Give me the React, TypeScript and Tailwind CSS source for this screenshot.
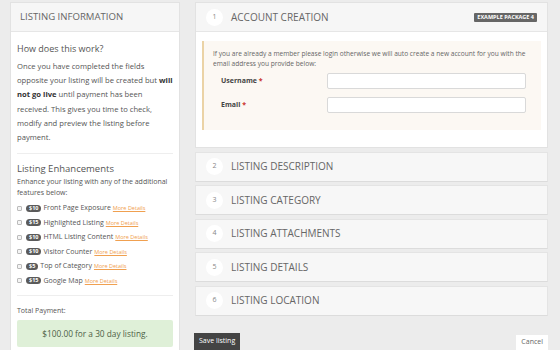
import React from 'react';

const font = { fontFamily: '"Open Sans", "Liberation Sans", sans-serif' };

const enhancements = [
  { price: '$10', label: 'Front Page Exposure' },
  { price: '$15', label: 'Highlighted Listing' },
  { price: '$10', label: 'HTML Listing Content' },
  { price: '$10', label: 'Visitor Counter' },
  { price: '$5', label: 'Top of Category' },
  { price: '$15', label: 'Google Map' },
];

const steps = [
  { n: 2, title: 'Listing Description' },
  { n: 3, title: 'Listing Category' },
  { n: 4, title: 'Listing Attachments' },
  { n: 5, title: 'Listing Details' },
  { n: 6, title: 'Listing Location' },
];

function StepCircle({ n }: { n: number }) {
  return (
    <div className="flex h-[17px] w-[17px] shrink-0 items-center justify-center rounded-full bg-white text-[7px] text-[#888]">
      {n}
    </div>
  );
}

function InfoPanel() {
  return (
    <aside className="flex w-[170px] shrink-0 flex-col border border-[#e2e2e2] bg-white">
      <div className="flex h-[29px] items-center border-b border-[#e6e6e6] bg-[#f6f6f6] px-[9px] text-[9.6px] uppercase text-[#666]">
        Listing Information
      </div>
      <div className="px-[6px] pt-[10px] text-[#555]">
        <h3 className="text-[9px] leading-[14px] text-[#555]">How does this work?</h3>
        <p className="mt-[3px] text-[7.65px] leading-[14.2px]">
          Once you have completed the fields opposite your listing will be created but{' '}
          <b className="font-bold leading-[14.2px] text-[#333]">will not go live</b> until payment has been received.
          This gives you time to check, modify and preview the listing before payment.
        </p>
        <div className="mt-[9px] border-t border-[#eeeeee]" />
        <h3 className="mt-[8px] text-[9.5px] leading-[14px] text-[#555]">Listing Enhancements</h3>
        <p className="mt-[1px] text-[7px] leading-[10.5px]">
          Enhance your listing with any of the additional features below:
        </p>
        <ul className="mt-[3px] flex flex-col">
          {enhancements.map((e) => (
            <li key={e.label} className="flex h-[14.5px] items-center text-[7px]">
              <span className="mr-[4px] h-[5px] w-[5px] rounded-[1px] border border-[#bbb] bg-[#f4f4f4]" />
              <span className="mr-[2px] rounded-full bg-[#5a5a5a] px-[3px] text-[5.5px] font-bold leading-[7px] text-white">
                {e.price}
              </span>
              <span className="text-[#555]">{e.label}</span>
              <a className="ml-[2px] text-[5.5px] text-[#f0a050] underline">More Details</a>
            </li>
          ))}
        </ul>
        <div className="mt-[7px] border-t border-[#eeeeee]" />
        <div className="mt-[10px] text-[7px] leading-[10px]">Total Payment:</div>
        <div className="mt-[4px] flex h-[27px] items-center justify-center rounded-[2px] bg-[#dff0d8] text-[8.3px] text-[#4d6145]">
          $100.00 for a 30 day listing.
        </div>
        <div className="h-[20px]" />
      </div>
    </aside>
  );
}

function AccountStep() {
  return (
    <section className="bg-white">
      <div className="flex h-[29px] items-center border-b border-[#e6e6e6] bg-[#f6f6f6] pl-[10px] pr-[10px]">
        <StepCircle n={1} />
        <span className="ml-[8px] text-[10px] uppercase text-[#666]">Account Creation</span>
        <span className="ml-auto rounded-[1px] bg-[#666] px-[3px] text-[5.5px] font-bold uppercase leading-[9px] text-white">
          Example Package 4
        </span>
      </div>
      <div className="px-[6px] pb-[17px] pt-[9px]">
        <div className="border-l-2 border-[#ebd3a6] bg-[#fcf8f3] pb-[17px] pl-[9px] pr-[8px] pt-[8px] text-[6.6px] leading-[10px] text-[#666]">
          <p>
            If you are already a member please login otherwise we will auto create a new account for you with the email
            address you provide below:
          </p>
          <div className="mt-[4px] flex flex-col gap-[8px]">
            {['Username', 'Email'].map((l) => (
              <div key={l} className="flex items-center">
                <label className="w-[114px] pl-[8px] text-[7px] font-bold text-[#444]">
                  {l} <span className="text-[#c9302c]">*</span>
                </label>
                <div className="h-[16px] w-[199px] rounded-[2px] border border-[#d9d9d9] bg-white" />
              </div>
            ))}
          </div>
        </div>
      </div>
    </section>
  );
}

export default function App() {
  return (
    <div className="h-[350px] w-[560px] overflow-hidden bg-[#ececec]" style={font}>
      <div className="flex gap-[15px] pl-[10px] pt-[2px]">
        <InfoPanel />
        <div className="flex w-[353px] flex-col">
          <div className="border border-[#e2e2e2]">
            <AccountStep />
          </div>
          {steps.map((s) => (
            <div
              key={s.n}
              className="mt-[3.5px] flex h-[30px] items-center border border-[#e4e4e4] border-b-[#dcdcdc] bg-[#f7f7f7] px-[10px]"
            >
              <StepCircle n={s.n} />
              <span className="ml-[8px] text-[10px] uppercase text-[#666]">{s.title}</span>
            </div>
          ))}
          <div className="mt-[17px] flex items-start justify-between">
            <button className="-ml-[1px] h-[18px] bg-[#444] px-[5px] text-[7px] text-white">Save listing</button>
            <button className="mt-[2px] h-[16px] bg-white px-[5px] text-[7px] text-[#666]">Cancel</button>
          </div>
        </div>
      </div>
    </div>
  );
}
